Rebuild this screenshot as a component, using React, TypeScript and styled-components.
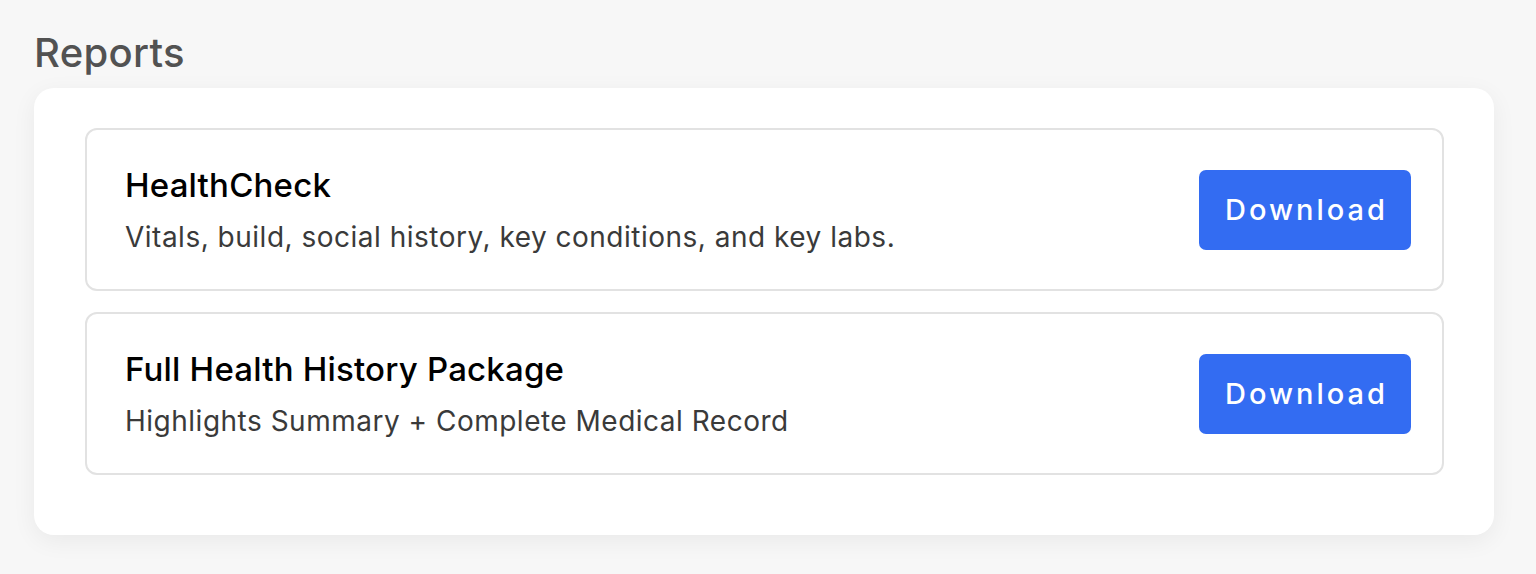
import React from 'react'
import styled, { createGlobalStyle } from 'styled-components'

type Report = {
    title: string;
    description: string;
}

const reports: Report[] = [
    { title: 'HealthCheck', description: 'Vitals, build, social history, key conditions, and key labs.' },
    { title: 'Full Health History Package', description: 'Highlights Summary + Complete Medical Record' },
]

const App = () => {
    return (
        <>
            <GlobalStyle />
            <Page>
                <Heading>Reports</Heading>
                <Card>
                    {reports.map((item, idx) => (
                        <ReportRow key={idx}>
                            <ReportText>
                                <ReportTitle>{item.title}</ReportTitle>
                                <ReportDesc>{item.description}</ReportDesc>
                            </ReportText>
                            <DownloadButton type="button">Download</DownloadButton>
                        </ReportRow>
                    ))}
                </Card>
            </Page>
        </>
    )
}

export default App

const GlobalStyle = createGlobalStyle`
    html, body {
        margin: 0;
        background: #f7f7f7;
        font-family: Inter, "Noto Sans", sans-serif;
    }
`;

const Page = styled.div`
    padding: 29px 42px 38px 34px;
`;

const Heading = styled.h2`
    margin: 0 0 11px;
    font-size: 40px;
    line-height: 48px;
    font-weight: 500;
    letter-spacing: 0.3px;
    color: #525252;
`;

const Card = styled.div`
    display: flex;
    flex-direction: column;
    gap: 21px;
    padding: 40px 50px 60px 51px;
    background: #fff;
    border-radius: 20px;
    box-shadow: 0 6px 24px rgba(0, 0, 0, 0.06);
`;

const ReportRow = styled.div`
    display: flex;
    align-items: center;
    justify-content: space-between;
    height: 163px;
    box-sizing: border-box;
    padding: 0 31px 0 38px;
    border: 2px solid #e2e2e2;
    border-radius: 12px;
`;

const ReportText = styled.div`
    display: flex;
    flex-direction: column;
    gap: 15px;
`;

const ReportTitle = styled.div`
    font-size: 33px;
    line-height: 40px;
    font-weight: 500;
    letter-spacing: 0.2px;
    color: #000;
`;

const ReportDesc = styled.div`
    font-size: 28px;
    line-height: 34px;
    letter-spacing: 0.5px;
    color: #3a3a3a;
`;

const DownloadButton = styled.button`
    width: 212px;
    height: 80px;
    border: none;
    border-radius: 7px;
    background: #336cf2;
    color: #fff;
    font-family: Inter, "Noto Sans", sans-serif;
    font-size: 29px;
    font-weight: 500;
    letter-spacing: 3px;
    text-indent: 3px;
    cursor: pointer;
`;
